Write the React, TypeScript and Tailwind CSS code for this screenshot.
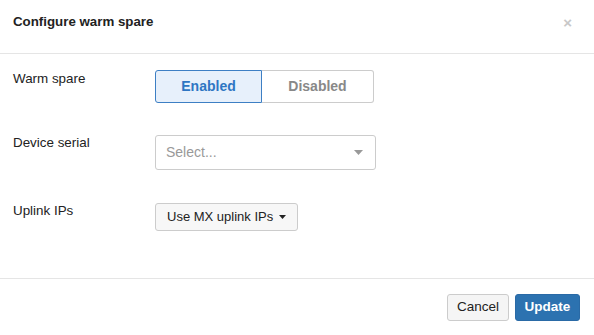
import React from "react";

const font = "font-['Liberation_Sans',Arial,sans-serif]";

function FieldRow({ label, labelPad, children }: { label: string; labelPad: string; children: React.ReactNode }) {
  return (
    <div className="flex items-start">
      <div className={`w-[155px] shrink-0 pl-[13px] text-[13.4px] leading-[16px] text-[#222] ${labelPad}`}>{label}</div>
      {children}
    </div>
  );
}

export default function App() {
  return (
    <div className={`w-[594px] h-[335px] bg-white flex flex-col ${font}`}>
      <div className="h-[54px] border-b border-[#e5e5e5] flex items-start justify-between pl-[13px] pr-[22px]">
        <h4 className="mt-[14px] text-[13.3px] leading-[16px] font-bold text-[#222]">Configure warm spare</h4>
        <button className="mt-[15px] text-[#c8c8c8] text-[15px] leading-[16px] font-bold" aria-label="Close">
          ×
        </button>
      </div>

      <div className="h-[224px] pt-[16px] flex flex-col">
        <FieldRow label="Warm spare" labelPad="pt-[1px]">
          <div className="flex h-[33px]">
            <button className="w-[107px] h-full border border-[#3d7fc4] bg-[#e7f0fb] text-[#2e76c3] text-[14px] font-bold rounded-l-[3px]">
              Enabled
            </button>
            <button className="w-[112px] h-full border border-l-0 border-[#ccc] bg-white text-[#888] text-[14px] font-bold rounded-r-[3px]">
              Disabled
            </button>
          </div>
        </FieldRow>

        <div className="mt-[32px]">
          <FieldRow label="Device serial" labelPad="pt-[0px]">
            <div className="w-[221px] h-[35px] border border-[#ccc] rounded-[3px] flex items-center justify-between pl-[10px] pr-[12px]">
              <span className="text-[14px] text-[#999]">Select...</span>
              <svg width="9" height="5" viewBox="0 0 9 5">
                <path d="M0 0h9L4.5 5z" fill="#999" />
              </svg>
            </div>
          </FieldRow>
        </div>

        <div className="mt-[33px]">
          <FieldRow label="Uplink IPs" labelPad="pt-[0px]">
            <button className="h-[28px] px-[11px] border border-[#ccc] rounded-[3px] bg-[#f7f7f7] flex items-center gap-[6px] text-[13px] text-[#222]">
              Use MX uplink IPs
              <svg width="7" height="4" viewBox="0 0 7 4">
                <path d="M0 0h7L3.5 4z" fill="#222" />
              </svg>
            </button>
          </FieldRow>
        </div>
      </div>

      <div className="flex-1 border-t border-[#e5e5e5] flex items-start justify-end gap-[6px] pr-[14px] pt-[15px]">
        <button className="h-[27px] w-[62px] border border-[#ccc] rounded-[3px] bg-[#f5f5f5] text-[13.5px] text-[#222]">
          Cancel
        </button>
        <button className="h-[27px] w-[65px] border border-[#2a6aa6] rounded-[3px] bg-[#2c72b0] text-[13.5px] font-bold text-white">
          Update
        </button>
      </div>
    </div>
  );
}
